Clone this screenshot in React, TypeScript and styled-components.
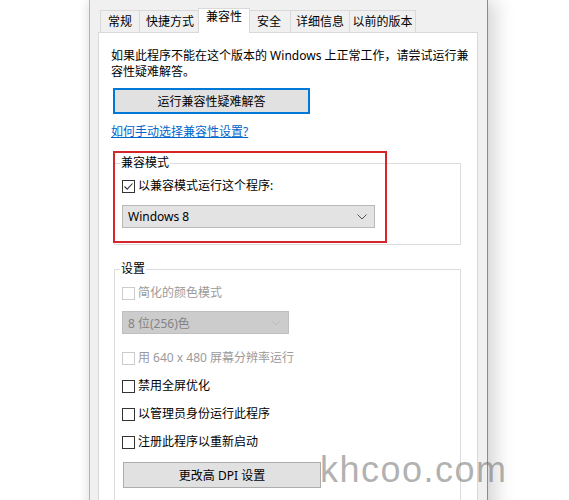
import React from 'react'
import styled, { createGlobalStyle } from 'styled-components'

const GlobalStyle = createGlobalStyle`
  html, body {
    margin: 0;
    padding: 0;
    background: #fff;
    overflow: hidden;
  }
  body {
    font-family: "Noto Sans", "Noto Sans CJK SC", sans-serif;
    font-size: 12px;
    color: #000;
  }
`

const tabs = [
  { label: '常规', w: 40 },
  { label: '快捷方式', w: 62 },
  { label: '兼容性', w: 52, active: true },
  { label: '安全', w: 44 },
  { label: '详细信息', w: 60 },
  { label: '以前的版本', w: 67 },
]

const Chevron = ({ color }: { color: string }) => (
  <svg width="10" height="6" viewBox="0 0 10 6">
    <polyline points="0.5,0.5 5,5 9.5,0.5" fill="none" stroke={color} strokeWidth="1" />
  </svg>
)

const CheckRow = ({ label, checked, disabled }: { label: string; checked?: boolean; disabled?: boolean }) => (
  <Row $disabled={disabled}>
    <Box $disabled={disabled}>
      {checked && (
        <svg width="11" height="11" viewBox="0 0 11 11">
          <polyline points="1.5,5.5 4.2,8.2 9.5,2.5" fill="none" stroke="#333" strokeWidth="1.1" />
        </svg>
      )}
    </Box>
    {label}
  </Row>
)

export default function App() {
  return (
    <Page>
      <GlobalStyle />
      <Window>
        <TabRow>
          {tabs.map((t) => (
            <Tab key={t.label} $w={t.w} $active={t.active}>
              {t.label}
            </Tab>
          ))}
        </TabRow>
        <Panel>
          <Paragraph>
            如果此程序不能在这个版本的 Windows 上正常工作，请尝试运行兼
            <br />
            容性疑难解答。
          </Paragraph>
          <Button $primary $w={197} $ml={2}>
            运行兼容性疑难解答
          </Button>
          <Link>如何手动选择兼容性设置?</Link>

          <GroupWrap $mt={23}>
            <GroupBox>
              <Legend>兼容模式</Legend>
              <Stack $first={7}>
                <CheckRow label="以兼容模式运行这个程序:" checked />
                <Select $w={253} $mt={11}>
                  Windows 8
                  <Chevron color="#555" />
                </Select>
              </Stack>
            </GroupBox>
            <Highlight />
          </GroupWrap>

          <GroupWrap $mt={24}>
            <GroupBox>
              <Legend>设置</Legend>
              <Stack $first={8}>
                <CheckRow label="简化的颜色模式" disabled />
                <Select $w={167} $mt={10} $disabled>
                  8 位(256)色
                  <Chevron color="#bcbcbc" />
                </Select>
                <Spaced $mt={16}>
                  <CheckRow label="用 640 x 480 屏幕分辨率运行" disabled />
                </Spaced>
                <Spaced $mt={12}>
                  <CheckRow label="禁用全屏优化" />
                </Spaced>
                <Spaced $mt={12}>
                  <CheckRow label="以管理员身份运行此程序" />
                </Spaced>
                <Spaced $mt={12}>
                  <CheckRow label="注册此程序以重新启动" />
                </Spaced>
                <Spaced $mt={12}>
                  <Button $w={198} $ml={1}>
                    更改高 DPI 设置
                  </Button>
                </Spaced>
              </Stack>
            </GroupBox>
          </GroupWrap>
        </Panel>
      </Window>
      <Watermark>khcoo.com</Watermark>
    </Page>
  )
}

const Page = styled.div`
  position: relative;
  width: 569px;
  height: 500px;
  padding-left: 89px;
  box-sizing: border-box;
  overflow: hidden;
`

const Window = styled.div`
  width: 399px;
  height: 520px;
  box-sizing: border-box;
  background: #f0f0f0;
  border-left: 1px solid #b4b4b4;
  border-right: 1px solid #8c8c8c;
  padding: 8px 9px 0 8px;
  box-shadow: 8px 0 18px rgba(0, 0, 0, 0.16), -3px 0 8px rgba(0, 0, 0, 0.06);
`

const TabRow = styled.div`
  display: flex;
  align-items: flex-end;
  height: 25px;
  padding-left: 2px;
  margin-bottom: -1px;
  position: relative;
  z-index: 1;
`

const Tab = styled.div<{ $w: number; $active?: boolean }>`
  box-sizing: border-box;
  width: ${(p) => p.$w}px;
  height: ${(p) => (p.$active ? 25 : 22)}px;
  margin-bottom: ${(p) => (p.$active ? 0 : 1)}px;
  margin-left: ${(p) => (p.$active ? -3 : -1)}px;
  margin-right: ${(p) => (p.$active ? -2 : 0)}px;
  padding-top: ${(p) => (p.$active ? 0 : 3)}px;
  border: 1px solid #d9d9d9;
  border-bottom: none;
  background: ${(p) => (p.$active ? '#fff' : '#f0f0f0')};
  text-align: center;
  line-height: 16px;
  white-space: nowrap;
  position: relative;
  z-index: ${(p) => (p.$active ? 2 : 1)};

  &:first-child {
    margin-left: 0;
  }
`

const Panel = styled.div`
  height: 480px;
  box-sizing: border-box;
  background: #fff;
  border: 1px solid #d9d9d9;
  padding: 15px 8px 0 12px;
`

const Paragraph = styled.p`
  margin: 0;
  line-height: 16px;
  white-space: nowrap;
`

const Button = styled.div<{ $primary?: boolean; $w: number; $ml: number }>`
  box-sizing: border-box;
  width: ${(p) => p.$w}px;
  height: 26px;
  margin-left: ${(p) => p.$ml}px;
  margin-top: ${(p) => (p.$primary ? 8 : 0)}px;
  display: flex;
  align-items: center;
  justify-content: center;
  background: #e1e1e1;
  border: 1px solid ${(p) => (p.$primary ? '#0078d7' : '#adadad')};
  box-shadow: ${(p) => (p.$primary ? 'inset 0 0 0 1px #0078d7' : 'none')};
  white-space: nowrap;
`

const Link = styled.a`
  display: inline-block;
  margin-top: 10px;
  line-height: 16px;
  color: #0066cc;
  text-decoration: underline;
  cursor: pointer;
`

const GroupWrap = styled.div<{ $mt: number }>`
  position: relative;
  width: 347px;
  margin-left: 3px;
  margin-top: ${(p) => p.$mt}px;
`

const GroupBox = styled.div`
  border: 1px solid #dcdcdc;
  padding: 0 0 16px 7px;
`

const Legend = styled.div`
  width: fit-content;
  margin: -9px 0 0 -2px;
  padding: 0 1px;
  background: #fff;
  line-height: 16px;
`

const Stack = styled.div<{ $first: number }>`
  display: flex;
  flex-direction: column;
  align-items: flex-start;
  padding-top: ${(p) => p.$first}px;
`

const Spaced = styled.div<{ $mt: number }>`
  margin-top: ${(p) => p.$mt}px;
`

const Row = styled.div<{ $disabled?: boolean }>`
  display: flex;
  align-items: center;
  height: 16px;
  line-height: 16px;
  white-space: nowrap;
  color: ${(p) => (p.$disabled ? '#9a9a9a' : '#000')};
`

const Box = styled.span<{ $disabled?: boolean }>`
  box-sizing: border-box;
  width: 13px;
  height: 13px;
  margin-right: 3px;
  display: flex;
  align-items: center;
  justify-content: center;
  background: #fff;
  border: 1px solid ${(p) => (p.$disabled ? '#cccccc' : '#333')};
`

const Select = styled.div<{ $w: number; $mt: number; $disabled?: boolean }>`
  box-sizing: border-box;
  width: ${(p) => p.$w}px;
  height: 23px;
  margin-top: ${(p) => p.$mt}px;
  padding: 0 7px 0 5px;
  display: flex;
  align-items: center;
  justify-content: space-between;
  background: ${(p) => (p.$disabled ? '#cccccc' : '#e3e3e3')};
  border: 1px solid ${(p) => (p.$disabled ? '#bfbfbf' : '#b9b9b9')};
  color: ${(p) => (p.$disabled ? '#838383' : '#000')};
  white-space: nowrap;
`

const Highlight = styled.div`
  position: absolute;
  left: -1px;
  top: -12px;
  width: 274px;
  height: 92px;
  box-sizing: border-box;
  border: 2px solid #d6262b;
  pointer-events: none;
`

const Watermark = styled.div`
  position: absolute;
  left: 320px;
  top: 452px;
  font-family: "Liberation Sans", Arial, sans-serif;
  font-size: 36px;
  line-height: 36px;
  letter-spacing: 1.5px;
  color: rgba(100, 100, 100, 0.5);
  pointer-events: none;
`
